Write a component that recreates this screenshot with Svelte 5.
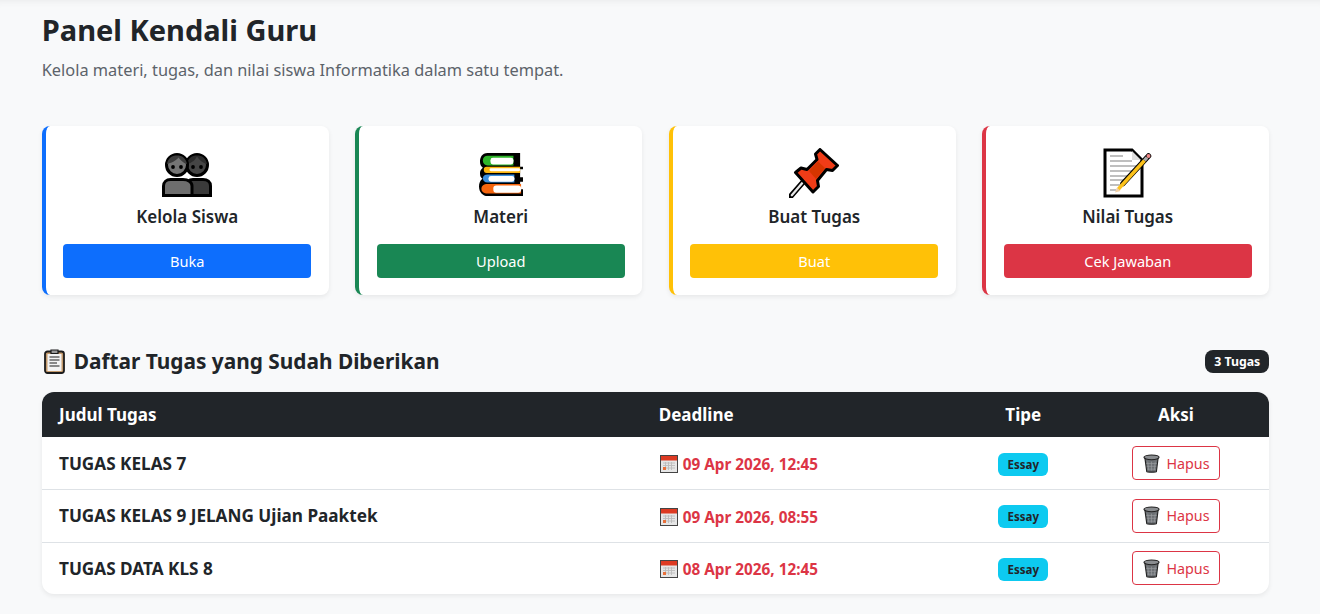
<script>
  const cards = [
    { key: 'users', title: 'Kelola Siswa', action: 'Buka', tone: 'blue' },
    { key: 'books', title: 'Materi', action: 'Upload', tone: 'green' },
    { key: 'pin', title: 'Buat Tugas', action: 'Buat', tone: 'yellow' },
    { key: 'memo', title: 'Nilai Tugas', action: 'Cek Jawaban', tone: 'red' }
  ];
  const rows = [
    { title: 'TUGAS KELAS 7', date: '09 Apr 2026, 12:45' },
    { title: 'TUGAS KELAS 9 JELANG Ujian Paaktek', date: '09 Apr 2026, 08:55' },
    { title: 'TUGAS DATA KLS 8', date: '08 Apr 2026, 12:45' }
  ];
</script>

<div class="page">
  <header class="intro">
    <h1>Panel Kendali Guru</h1>
    <p>Kelola materi, tugas, dan nilai siswa Informatika dalam satu tempat.</p>
  </header>

  <section class="cards">
    {#each cards as c}
      <article class="card {c.tone}">
        <div class="icon">
          {#if c.key === 'users'}
            <svg viewBox="0 -5 50 50" width="50" height="50">
              <path d="M24 42.500V33C24 29 27 26.500 31 26.500H41C45.500 26.500 48.500 29 48.500 33V42.500Z" fill="#3a3a3a" stroke="#000" stroke-width="3"/>
              <circle cx="35" cy="12" r="10.500" fill="#454545" stroke="#000" stroke-width="3"/>
              <path d="M25 11C30 10 33 7 35 3.500C37 7 41 10 45 11C44 5 40 2.500 35 2.500C30 2.500 26 5 25 11Z" fill="#2c2c2c"/>
              <path d="M1.500 42.500V33C1.500 29 4.500 26.500 8.500 26.500H21C26 26.500 30 29 30 33V42.500Z" fill="#6e6e6e" stroke="#000" stroke-width="3"/>
              <circle cx="15" cy="12" r="10.500" fill="#757575" stroke="#000" stroke-width="3"/>
              <path d="M5 11C9 10 14 8 16.500 4.500C18.500 7 21 10 25 11C24 5 20 2.500 15 2.500C10 2.500 6 5 5 11Z" fill="#3d3d3d"/>
              <circle cx="11" cy="14" r="1.900" fill="#000"/><circle cx="19" cy="14" r="1.900" fill="#000"/>
              <circle cx="31" cy="14" r="1.900" fill="#000"/><circle cx="39" cy="14" r="1.900" fill="#000"/>
            </svg>
          {:else if c.key === 'books'}
            <svg viewBox="0 -5.200 46 52.300" width="44" height="50">
              <path d="M43 0H9C3 0 1 5 1 9C1 12 2 14 4 15.500C2 17 1 19 1 21.500C1 24 2 26 3.500 27C1 29 0 32 0 35C0 41 4 45 9 45H46V38H43V30H46V25.500H43V17H46V14.500H43Z" fill="#000"/>
              <path d="M9 3H36V13H9C6 13 4 11 4 8C4 5 6 3 9 3Z" fill="#2fb52a"/>
              <rect x="12" y="5" width="24" height="7" rx="2.500" fill="#fff"/>
              <path d="M8 14.500H43V21H8C6 21 5 19.500 5 17.500C5 15.500 6 14.500 8 14.500Z" fill="#fcb50e"/>
              <rect x="11" y="16" width="32" height="3" rx="1.500" fill="#fff"/>
              <path d="M9 22.500H37V31H9C6 31 4 29 4 26.500C4 24 6 22.500 9 22.500Z" fill="#3b8fe0"/>
              <rect x="10" y="24" width="27" height="6" rx="2.500" fill="#fff"/>
              <path d="M9 32.500H44V42.500H9C5 42.500 2.500 40.500 2.500 37.500C2.500 34.500 5 32.500 9 32.500Z" fill="#f5650e"/>
              <rect x="15" y="34" width="29" height="7.500" rx="3" fill="#fff"/>
            </svg>
          {:else if c.key === 'pin'}
            <svg viewBox="0 0 50 50" width="50" height="50">
              <path d="M2 48L15 33" stroke="#000" stroke-width="5.500" stroke-linecap="round"/>
              <path d="M2.800 47.200L15 33" stroke="#e8e8e8" stroke-width="2.300" stroke-linecap="round"/>
              <path d="M31 1.500L48.500 17.500L43.500 22.500L37.500 21.500L28.500 32.500L29.500 38.500L24 44L6.500 24.500L12 20L18 21.500L28 11.500L26.500 6Z" fill="#f03c17" stroke="#000" stroke-width="3" stroke-linejoin="round"/>
              <path d="M20 23L29 13.500L36 20L27 31Z" fill="#d63500"/>
            </svg>
          {:else}
            <svg viewBox="0 0 50 50" width="50" height="50">
              <path d="M2 2H29L39 12V48H2Z" fill="#fff" stroke="#000" stroke-width="3"/>
              <path d="M29 3V12H38" fill="#ddd"/>
              <path d="M7 8H20M7 13H29M7 18H34M7 23H33M7 28H30M7 32H26M7 37H22M7 42H13" stroke="#aaa" stroke-width="1.700"/>
              <path d="M20 35.500L45.500 8" stroke="#000" stroke-width="5.500" stroke-linecap="round"/>
              <path d="M15 41.500L41.500 12.500" stroke="#fcc21b" stroke-width="3.500"/>
              <path d="M41.500 12.500L44 9.500" stroke="#aaa" stroke-width="3.500"/>
              <circle cx="45.500" cy="8" r="2" fill="#e88" />
              <path d="M12 44.500L14 39.500L17.500 43Z" fill="#f2d0a5"/>
            </svg>
          {/if}
        </div>
        <h2>{c.title}</h2>
        <button class="action">{c.action}</button>
      </article>
    {/each}
  </section>

  <section class="list">
    <div class="list-head">
      <h3>
        <svg class="clip" viewBox="0 0 21 25" width="21" height="25">
          <rect x="1" y="2.500" width="19" height="21.500" rx="2.500" fill="#c49a6c" stroke="#1c1c1c" stroke-width="1.800"/>
          <rect x="3.500" y="5" width="14" height="17" fill="#f3f3f3"/>
          <path d="M5.500 8H15.500M5.500 11H15.500M5.500 14H13M5.500 17H15.500" stroke="#666" stroke-width="1.300"/>
          <path d="M7 4.500V1H14V4.500Z" fill="#999" stroke="#1c1c1c" stroke-width="1.200"/>
        </svg>
        Daftar Tugas yang Sudah Diberikan
      </h3>
      <span class="count">3 Tugas</span>
    </div>

    <div class="table">
      <div class="row head">
        <div>Judul Tugas</div>
        <div>Deadline</div>
        <div class="center">Tipe</div>
        <div class="center">Aksi</div>
      </div>
      {#each rows as r}
        <div class="row body">
          <div class="name">{r.title}</div>
          <div class="date">
            <svg viewBox="0 0 18 18" width="18" height="18">
              <rect x="0.500" y="0.500" width="17" height="17" fill="#e6e6e6" stroke="#444"/>
              <rect x="1" y="1" width="16" height="4.500" fill="#dd3a22"/>
              <path d="M3 8H15M3 10.500H15M3 13H15M5.500 7V15M8.500 7V15M11.500 7V15" stroke="#bbb" stroke-width="0.900"/>
              <rect x="3" y="12" width="3" height="3" fill="#e8703a"/>
            </svg>
            <span>{r.date}</span>
          </div>
          <div class="center"><span class="badge">Essay</span></div>
          <div class="center">
            <button class="delete">
              <svg viewBox="0 0 18 20" width="17" height="19">
                <path d="M2 4L4 18.500C4.200 19.400 14 19.400 14.200 18.500L16 4Z" fill="#6c7074" stroke="#222" stroke-width="1.200"/>
                <ellipse cx="9" cy="3.500" rx="8" ry="2.500" fill="#8a8d90" stroke="#222" stroke-width="1.200"/>
                <path d="M5 8L6 17M9 8V17.500M13 8L12 17M3.500 10H14.500M4 13H14M4.500 16H13.500" stroke="#9a9da0" stroke-width="0.700"/>
              </svg>
              <span>Hapus</span>
            </button>
          </div>
        </div>
      {/each}
    </div>
  </section>
</div>

<style>
  :global(body) {
    margin: 0;
    background: #f8f9fa;
    font-family: "Noto Sans", "Open Sans", "Liberation Sans", sans-serif;
    color: #212529;
  }
  .page {
    height: 614px;
    box-sizing: border-box;
    overflow: hidden;
    padding: 0 0 0 41.750px;
    box-shadow: inset 0 8px 8px -8px rgba(0, 0, 0, 0.08);
  }
  .intro { padding-top: 10px; }
  h1 {
    margin: 0;
    font-size: 29px;
    line-height: 40px;
    font-weight: 700;
  }
  .intro p {
    margin: 8px 0 0;
    font-size: 16.350px;
    line-height: 24px;
    color: #5c636a;
  }
  .cards {
    display: grid;
    grid-template-columns: repeat(4, 287px);
    column-gap: 26.500px;
    margin-top: 44px;
  }
  .card {
    box-sizing: border-box;
    height: 169px;
    background: #fff;
    border-radius: 8px;
    border-left: 4px solid;
    box-shadow: 0 2px 5px rgba(0, 0, 0, 0.07);
    padding: 0 17.500px;
    display: flex;
    flex-direction: column;
    align-items: center;
  }
  .blue { border-color: #0d6efd; --c: #0d6efd; }
  .green { border-color: #198754; --c: #198754; }
  .yellow { border-color: #ffc107; --c: #ffc107; }
  .red { border-color: #dc3545; --c: #dc3545; }
  .icon {
    height: 50px;
    margin-top: 22px;
    display: flex;
    align-items: center;
    justify-content: center;
  }
  h2 {
    margin: 6px 0 0;
    font-size: 17px;
    line-height: 25px;
    font-weight: 600;
  }
  .action {
    width: 248px;
    height: 34px;
    margin-top: 15px;
    border: 0;
    border-radius: 4px;
    background: var(--c);
    color: #fff;
    font: inherit;
    font-size: 14.600px;
    padding: 0;
  }
  .list { margin-top: 46px; width: 1227.500px; }
  .list-head {
    display: flex;
    align-items: center;
    justify-content: space-between;
    height: 40px;
  }
  h3 {
    margin: 0;
    display: flex;
    align-items: center;
    gap: 9px;
    font-size: 20.830px;
    font-weight: 700;
  }
  .clip { margin-left: 2px; }
  .count {
    background: #212529;
    color: #fff;
    font-size: 12.300px;
    font-weight: 700;
    border-radius: 8px;
    padding: 0 9px;
    line-height: 23px;
  }
  .table {
    margin-top: 11px;
    background: #fff;
    border-radius: 12px;
    overflow: hidden;
    box-shadow: 0 2px 5px rgba(0, 0, 0, 0.07);
  }
  .row {
    display: grid;
    grid-template-columns: 617px 305px 119px 1fr;
    align-items: center;
  }
  .row > :first-child { padding-left: 17.250px; }
  .center { display: flex; justify-content: center; }
  .head {
    height: 45px;
    background: #212529;
    color: #fff;
    font-size: 17px;
    font-weight: 700;
  }
  .body { height: 52.330px; border-top: 1px solid #dee2e6; box-sizing: border-box; }
  .head + .body { border-top: 0; }
  .name { font-size: 17.160px; font-weight: 700; }
  .date {
    display: flex;
    align-items: center;
    gap: 5px;
    padding-top: 2px;
    padding-left: 1px;
    color: #dc3545;
    font-size: 15.300px;
    font-weight: 700;
  }
  .badge {
    background: #0dcaf0;
    color: #212529;
    font-size: 11.500px;
    font-weight: 700;
    border-radius: 6px;
    margin-top: 2px;
    padding: 0 9.500px;
    line-height: 23px;
  }
  .delete {
    display: inline-flex;
    align-items: center;
    gap: 6px;
    width: 88px;
    height: 34px;
    box-sizing: border-box;
    justify-content: center;
    padding: 0 0 0 1px;
    background: transparent;
    border: 1px solid #dc3545;
    border-radius: 4px;
    color: #dc3545;
    font: inherit;
    font-size: 14.300px;
  }
</style>
